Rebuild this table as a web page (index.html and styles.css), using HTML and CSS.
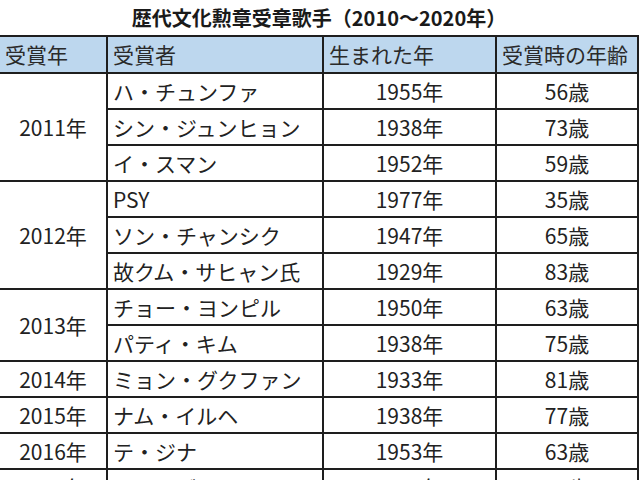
FILE: index.html
```html
<!DOCTYPE html>
<html lang="ja">
<head>
<meta charset="utf-8">
<link rel="stylesheet" href="styles.css">
</head>
<body>
<div class="sheet">
  <div class="title">歴代文化勲章受章歌手（2010～2020年）</div>
  <table class="grid">
    <colgroup>
      <col class="c1"><col class="c2"><col class="c3"><col class="c4">
    </colgroup>
    <thead>
      <tr class="head">
        <th class="first">受賞年</th>
        <th>受賞者</th>
        <th>生まれた年</th>
        <th>受賞時の年齢</th>
      </tr>
    </thead>
    <tbody>
      <tr><td class="year first" rowspan="3">2011年</td><td class="name">ハ・チュンファ</td><td class="num">1955年</td><td class="num">56歳</td></tr>
      <tr><td class="name">シン・ジュンヒョン</td><td class="num">1938年</td><td class="num">73歳</td></tr>
      <tr><td class="name">イ・スマン</td><td class="num">1952年</td><td class="num">59歳</td></tr>
      <tr><td class="year first" rowspan="3">2012年</td><td class="name">PSY</td><td class="num">1977年</td><td class="num">35歳</td></tr>
      <tr><td class="name">ソン・チャンシク</td><td class="num">1947年</td><td class="num">65歳</td></tr>
      <tr><td class="name">故クム・サヒャン氏</td><td class="num">1929年</td><td class="num">83歳</td></tr>
      <tr><td class="year first" rowspan="2">2013年</td><td class="name">チョー・ヨンピル</td><td class="num">1950年</td><td class="num">63歳</td></tr>
      <tr><td class="name">パティ・キム</td><td class="num">1938年</td><td class="num">75歳</td></tr>
      <tr><td class="year first">2014年</td><td class="name">ミョン・グクファン</td><td class="num">1933年</td><td class="num">81歳</td></tr>
      <tr><td class="year first">2015年</td><td class="name">ナム・イルヘ</td><td class="num">1938年</td><td class="num">77歳</td></tr>
      <tr><td class="year first">2016年</td><td class="name">テ・ジナ</td><td class="num">1953年</td><td class="num">63歳</td></tr>
      <tr><td class="year first">2017年</td><td class="name">ユン・ボッキ</td><td class="num">1946年</td><td class="num">71歳</td></tr>
    </tbody>
  </table>
</div>
</body>
</html>
```
FILE: styles.css
```css
html, body {
  margin: 0;
  padding: 0;
  background: #ffffff;
}
body {
  width: 640px;
  height: 480px;
  overflow: hidden;
  font-family: "Noto Sans CJK JP", "Noto Sans", sans-serif;
  color: #222222;
}
.sheet {
  width: 638px;
}
.title {
  height: 35px;
  line-height: 35px;
  text-align: center;
  font-weight: bold;
  font-size: 20px;
  color: #1a1a1a;
  padding-left: 0;
}
.grid {
  border-collapse: collapse;
  table-layout: fixed;
  width: 638px;
  font-size: 21px;
  line-height: 1;
}
.c1 { width: 107px; }
.c2 { width: 216px; }
.c3 { width: 173px; }
.c4 { width: 142px; }
.grid th,
.grid td {
  border: 2px solid #1e1e1e;
  padding: 0 5px;
  height: 36px;
  box-sizing: border-box;
  vertical-align: middle;
  white-space: nowrap;
  overflow: hidden;
}
.grid .first {
  border-left: none;
}
.head th {
  background: #bdd7ee;
  font-weight: normal;
  text-align: left;
  color: #2a2a2a;
  height: 37px;
}
.year {
  text-align: center;
}
.name {
  text-align: left;
}
.num {
  text-align: center;
}
```
